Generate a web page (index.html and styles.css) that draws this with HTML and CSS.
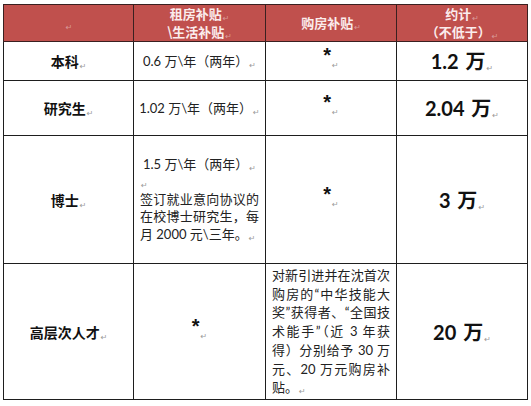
FILE: index.html
```html
<!DOCTYPE html>
<html lang="zh">
<head>
<meta charset="utf-8">
<title>补贴</title>
<link rel="stylesheet" href="styles.css">
</head>
<body>
<table class="grid">
  <colgroup>
    <col class="c1"><col class="c2"><col class="c3"><col class="c4">
  </colgroup>
  <thead>
    <tr class="head">
      <th><span class="pm light">↵</span></th>
      <th><div>租房补贴<span class="pm light">↵</span></div><div>\生活补贴<span class="pm light">↵</span></div></th>
      <th>购房补贴<span class="pm light">↵</span></th>
      <th><div>约计<span class="pm light">↵</span></div><div>（不低于）<span class="pm light">↵</span></div></th>
    </tr>
  </thead>
  <tbody>
    <tr class="r1">
      <td class="lbl">本科<span class="pm">↵</span></td>
      <td class="txt">0.6 万\年（两年）<span class="pm">↵</span></td>
      <td class="star"><span class="ast">*</span><span class="pm">↵</span></td>
      <td class="val">1.2 万<span class="pm">↵</span></td>
    </tr>
    <tr class="r2">
      <td class="lbl">研究生<span class="pm">↵</span></td>
      <td class="txt">1.02 万\年（两年）<span class="pm">↵</span></td>
      <td class="star"><span class="ast">*</span><span class="pm">↵</span></td>
      <td class="val">2.04 万<span class="pm">↵</span></td>
    </tr>
    <tr class="r3">
      <td class="lbl">博士<span class="pm">↵</span></td>
      <td class="para">
        <div class="center">1.5 万\年（两年）<span class="pm">↵</span></div>
        <div><span class="pm">↵</span></div>
        <div class="jl">签订就业意向协议的</div>
        <div class="jl">在校博士研究生，每</div>
        <div>月 2000 元\三年。<span class="pm">↵</span></div>
      </td>
      <td class="star"><span class="ast">*</span><span class="pm">↵</span></td>
      <td class="val">3 万<span class="pm">↵</span></td>
    </tr>
    <tr class="r4">
      <td class="lbl">高层次人才<span class="pm">↵</span></td>
      <td class="star"><span class="ast">*</span><span class="pm">↵</span></td>
      <td class="para tall">
        <div class="jl">对新引进并在沈首次</div>
        <div class="jl">购房的“中华技能大</div>
        <div class="jl">奖”获得者、“全国技</div>
        <div class="jl">术能手”（近 3 年获</div>
        <div class="jl">得）分别给予 30 万</div>
        <div class="jl">元、20 万元购房补</div>
        <div>贴。<span class="pm">↵</span></div>
      </td>
      <td class="val">20 万<span class="pm">↵</span></td>
    </tr>
  </tbody>
</table>
</body>
</html>
```
FILE: styles.css
```css
html, body {
  background: #ffffff;
}
body {
  margin: 0;
  padding: 4px 0 0 3px;
  font-family: "Lato", "Noto Sans CJK SC", sans-serif;
  color: #1a1a1a;
}
.grid {
  border-collapse: collapse;
  table-layout: fixed;
  width: 524px;
}
.c1 { width: 130px; }
.c2 { width: 132px; }
.c3 { width: 131px; }
.c4 { width: 131px; }
.grid th, .grid td {
  border: 1px solid #1e1e1e;
  padding: 0 4px;
  text-align: center;
  vertical-align: middle;
  white-space: nowrap;
  overflow: hidden;
}
.head th {
  background: #c0504d;
  color: #fbecec;
  font-family: "Noto Sans CJK SC", sans-serif;
  font-weight: 700;
  font-size: 13px;
  line-height: 18px;
  height: 36px;
  border-color: #3a2020;
}
.r1 td { height: 38px; }
.r2 td { height: 54px; }
.r3 td { height: 127px; }
.r4 td { height: 135px; }
.lbl {
  font-family: "Noto Sans CJK SC", sans-serif;
  font-weight: 700;
  font-size: 14px;
  line-height: 18px;
  color: #111;
}
.txt {
  font-family: "Lato", "Noto Sans CJK SC", sans-serif;
  font-size: 13px;
  line-height: 18px;
  color: #222;
}
.star {
  font-family: "Liberation Sans", sans-serif;
  line-height: 18px;
}
.ast {
  font-size: 20px;
  line-height: 0;
  font-weight: 700;
  position: relative;
  top: -4px;
  color: #111;
}
.val {
  font-family: "Lato", "Noto Sans CJK SC", sans-serif;
  font-weight: 700;
  font-size: 20px;
  line-height: 24px;
  word-spacing: 2px;
  color: #111;
}
.grid td.para {
  font-family: "Lato", "Noto Sans CJK SC", sans-serif;
  font-size: 13px;
  line-height: 17.5px;
  color: #222;
  text-align: left;
  padding: 0 6px;
}
.grid td.para.tall {
  line-height: 18.8px;
}
.para .center { text-align: center; }
.jl {
  text-align: justify;
  text-align-last: justify;
}
.pm {
  font-family: "DejaVu Sans", sans-serif;
  font-size: 8px;
  line-height: 0;
  font-weight: 400;
  color: #9a9a9a;
  margin-left: 1px;
  position: relative;
  top: 2px;
}
.pm.light {
  color: #d99a98;
}
```
